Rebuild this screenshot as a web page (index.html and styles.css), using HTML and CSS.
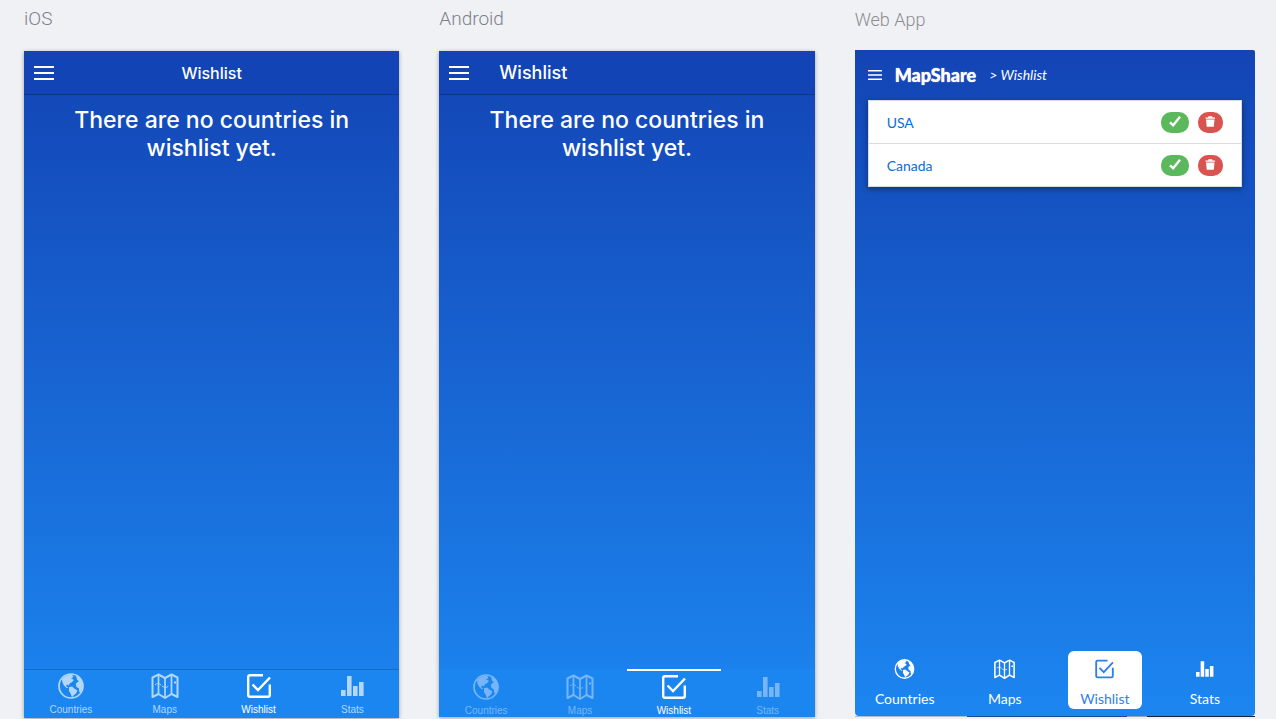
FILE: index.html
```html
<!DOCTYPE html>
<html lang="en">
<head>
<meta charset="utf-8">
<title>MapShare – Wishlist</title>
<link rel="stylesheet" href="styles.css">
</head>
<body>
<svg class="sprite" aria-hidden="true">
  <symbol id="globe" viewBox="0 0 26 26">
    <circle cx="13" cy="13" r="12" fill="none" stroke="currentColor" stroke-width="1.700"/>
    <path fill="currentColor" d="M4 6 8 2.500 14 1.500 15.500 4 13 5.300 16 7 13.500 9.500 11.500 10.500 11 12.500 9 11.500 8 13 10.500 15 8.500 15 6 12.500 4.500 9.500z"/>
    <path fill="currentColor" d="M11 14.200 14 13.500 17 16 19.500 17.500 18 20.500 15.500 22.500 14 24.500 12.800 21 11 18z"/>
    <path fill="currentColor" d="M18 2.500 22 5 24.700 10 24.700 15 22.500 19.500 21 18.500 21 15.500 18.500 14 17.800 11 19.500 9 21 8.500 19 6.500z"/>
  </symbol>
  <symbol id="map" viewBox="0 0 28 26">
    <path fill="none" stroke="currentColor" stroke-width="2" stroke-linejoin="round" d="M1.500 4.500 7.500 1.500l6.500 3.500 6.500-3.500 6 3v19.500l-6-3-6.500 4-6.500-4-6 3z"/>
    <path fill="none" stroke="currentColor" stroke-width="1.700" d="M7.500 1.500v19.500M14 4.500v20M20.500 1.500v19.500"/>
    <path fill="none" stroke="currentColor" stroke-width="1" stroke-dasharray="3 1" d="M4 12c3-3 5-1 7 1s5 2 7-.5"/>
    <path fill="currentColor" d="M23 8.500h2v2h-2z"/>
  </symbol>
  <symbol id="check-box" viewBox="0 0 26 26">
    <path fill="none" stroke="currentColor" stroke-width="2.400" d="M17 2.200H4Q2.200 2.200 2.200 4v18Q2.200 23.800 4 23.800h18q1.800 0 1.800-1.800V11.500"/>
    <path fill="none" stroke="currentColor" stroke-width="2.400" d="m6.500 11.500 5.500 5.500L24 4.500"/>
  </symbol>
  <symbol id="bars" viewBox="0 0 26 26">
    <path fill="currentColor" d="M2 17h4.600v6H2zM8 3h4.600v20H8zM14 13h4.600v10H14zM20 9h4.600v14H20z"/>
  </symbol>
  <symbol id="menu" viewBox="0 0 20 14">
    <path fill="currentColor" d="M0 0h20v2H0zM0 6h20v2H0zM0 12h20v2H0z"/>
  </symbol>
  <symbol id="tick" viewBox="0 0 12 12">
    <path fill="none" stroke="currentColor" stroke-width="2.400" d="m1 6.300 3.200 3L11 .8"/>
  </symbol>
  <symbol id="trash" viewBox="0 0 12 12">
    <path fill="currentColor" d="M1.500 1.500h2.500L4.500.3h3.500l.5 1.200h2.500v1.300h-9.500zM2 3.500h8.500L9.800 10.800H2.700z"/>
  </symbol>
</svg>

<main class="board">
  <section class="preview">
    <h2 class="label">iOS</h2>
    <div class="screen native">
      <header class="bar">
        <button class="menu" aria-label="Menu"><svg><use href="#menu"/></svg></button>
        <h1 class="title centered">Wishlist</h1>
      </header>
      <p class="empty">There are no countries in wishlist yet.</p>
      <nav class="tabs native-tabs">
        <a class="tab" href="#countries"><svg><use href="#globe"/></svg>Countries</a>
        <a class="tab" href="#maps"><svg class="wide"><use href="#map"/></svg>Maps</a>
        <a class="tab active" href="#wishlist"><svg><use href="#check-box"/></svg>Wishlist</a>
        <a class="tab" href="#stats"><svg><use href="#bars"/></svg>Stats</a>
      </nav>
    </div>
  </section>

  <section class="preview">
    <h2 class="label">Android</h2>
    <div class="screen native">
      <header class="bar">
        <button class="menu" aria-label="Menu"><svg><use href="#menu"/></svg></button>
        <h1 class="title large">Wishlist</h1>
      </header>
      <p class="empty">There are no countries in wishlist yet.</p>
      <nav class="tabs native-tabs android-tabs">
        <a class="tab" href="#countries"><svg><use href="#globe"/></svg>Countries</a>
        <a class="tab" href="#maps"><svg class="wide"><use href="#map"/></svg>Maps</a>
        <a class="tab active" href="#wishlist"><svg><use href="#check-box"/></svg>Wishlist</a>
        <a class="tab" href="#stats"><svg><use href="#bars"/></svg>Stats</a>
      </nav>
    </div>
  </section>

  <section class="preview">
    <h2 class="label web-label">Web App</h2>
    <div class="screen web">
      <header class="web-bar">
        <button class="menu small" aria-label="Menu"><svg><use href="#menu"/></svg></button>
        <h1 class="brand">MapShare</h1>
        <span class="crumb">&gt; Wishlist</span>
      </header>
      <ul class="list">
        <li class="row">
          <a class="country" href="#usa">USA</a>
          <button class="pill done" aria-label="Mark USA visited"><svg><use href="#tick"/></svg></button>
          <button class="pill remove" aria-label="Remove USA"><svg><use href="#trash"/></svg></button>
        </li>
        <li class="row">
          <a class="country" href="#canada">Canada</a>
          <button class="pill done" aria-label="Mark Canada visited"><svg><use href="#tick"/></svg></button>
          <button class="pill remove" aria-label="Remove Canada"><svg><use href="#trash"/></svg></button>
        </li>
      </ul>
      <nav class="tabs web-tabs">
        <a class="tab" href="#countries"><svg><use href="#globe"/></svg>Countries</a>
        <a class="tab" href="#maps"><svg class="wide"><use href="#map"/></svg>Maps</a>
        <a class="tab active" href="#wishlist"><svg><use href="#check-box"/></svg>Wishlist</a>
        <a class="tab" href="#stats"><svg><use href="#bars"/></svg>Stats</a>
      </nav>
    </div>
    <div class="edge"></div>
  </section>
</main>
</body>
</html>
```

FILE: styles.css
```css
* { box-sizing: border-box; }

body {
  margin: 0;
  background: #eff1f5;
  font-family: "Liberation Sans", Arial, sans-serif;
  color: #fff;
}

h1, h2, p, ul { margin: 0; padding: 0; }
a { color: inherit; text-decoration: none; }
button { border: 0; padding: 0; background: none; color: inherit; display: flex; align-items: center; justify-content: center; }
.sprite { display: none; }

.board {
  display: grid;
  grid-template-columns: 375fr 375fr 400fr;
  gap: 40px;
  min-height: 100vh;
  padding: 0 21px 0 24px;
}

.preview { display: flex; flex-direction: column; padding-bottom: 2px; }
.preview:first-child { padding-bottom: 1px; }

.label {
  height: 51px;
  padding-top: 8px;
  font: 300 19px/22px Roboto, sans-serif;
  color: #7d808c;
}
.web-label { height: 50px; font-size: 18px; line-height: 24px; color: #8d8d8f; }

.screen {
  flex: 1;
  display: flex;
  flex-direction: column;
  background: linear-gradient(#1344b5, #1c86f0);
}
.native { box-shadow: 0 1px 4px rgba(0, 0, 0, 0.35); }

.bar {
  display: grid;
  grid-template-columns: 40px 1fr 40px;
  align-items: center;
  height: 44px;
  border-bottom: 1px solid #10348c;
  background: #1344b5;
}
.menu svg { width: 20px; height: 14px; }
.title { font: 500 16px/22px Inter, sans-serif; }
.centered { text-align: center; }
.large { padding-left: 20px; font-size: 18px; }

.empty {
  max-width: 340px;
  margin: 11px auto 0;
  font: 500 23px/28px Inter, sans-serif;
  text-align: center;
}

.tabs { display: grid; grid-template-columns: repeat(4, 1fr); margin-top: auto; }
.tab { display: flex; flex-direction: column; align-items: center; }
.tab svg { width: 26px; height: 26px; }
.tab svg.wide { width: 28px; }

.native-tabs {
  height: 49px;
  border-top: 1px solid #126bcb;
  background: #1c86f0;
  font-size: 10px;
  line-height: 12px;
}
.native-tabs .tab { gap: 5px; padding-top: 3px; color: #b2d7fa; }
.android-tabs { height: 48px; border-top: 0; }
.android-tabs .tab { border-top: 2px solid transparent; color: #77b6f6; }
.native-tabs .tab.active { border-color: #fff; color: #fff; }

.web { padding: 0 13px; border-radius: 0 2px 4px 4px; font-family: Lato, sans-serif; }
.web-bar { display: flex; align-items: center; height: 50px; }
.small svg { width: 14px; height: 10px; }
.brand { margin-left: 13px; font-size: 18px; font-weight: 900; line-height: 24px; text-shadow: 0 0 1px #fff; }
.crumb { margin-left: 13px; font-size: 14px; font-style: italic; line-height: 24px; }

.list {
  border: 1px solid #d8dbe0;
  background: #fff;
  box-shadow: 0 2px 6px rgba(0, 0, 0, 0.4);
  list-style: none;
}
.row { box-sizing: content-box; display: flex; align-items: center; height: 42px; padding: 0 18px; }
.row + .row { border-top: 1px solid #d9dbdf; }
.country { margin-right: auto; padding-top: 2px; color: #0b6cd3; font-size: 14px; line-height: 20px; }
.pill { height: 21px; border-radius: 10px; }
.pill svg { width: 12px; height: 12px; }
.done { width: 28px; margin-right: 9px; background: #5cb85c; }
.remove { width: 25px; background: #d9534f; }

.web-tabs { margin-right: -13px; margin-bottom: 7px; margin-left: -13px; font-size: 14px; line-height: 20px; }
.web-tabs .tab { gap: 10px; height: 58px; margin: 0 13px; padding-top: 8px; border-radius: 6px; }
.web-tabs svg { width: 21px; height: 21px; }
.web-tabs svg.wide { width: 23px; }
.web-tabs .tab.active { background: #fff; color: #2f7fe6; }

.edge {
  height: 1px;
  background: linear-gradient(90deg, #b4bccb 28%, #164a92 28% 68%, #9aa5b8 68% 73%, #10233f 73%);
}
```
